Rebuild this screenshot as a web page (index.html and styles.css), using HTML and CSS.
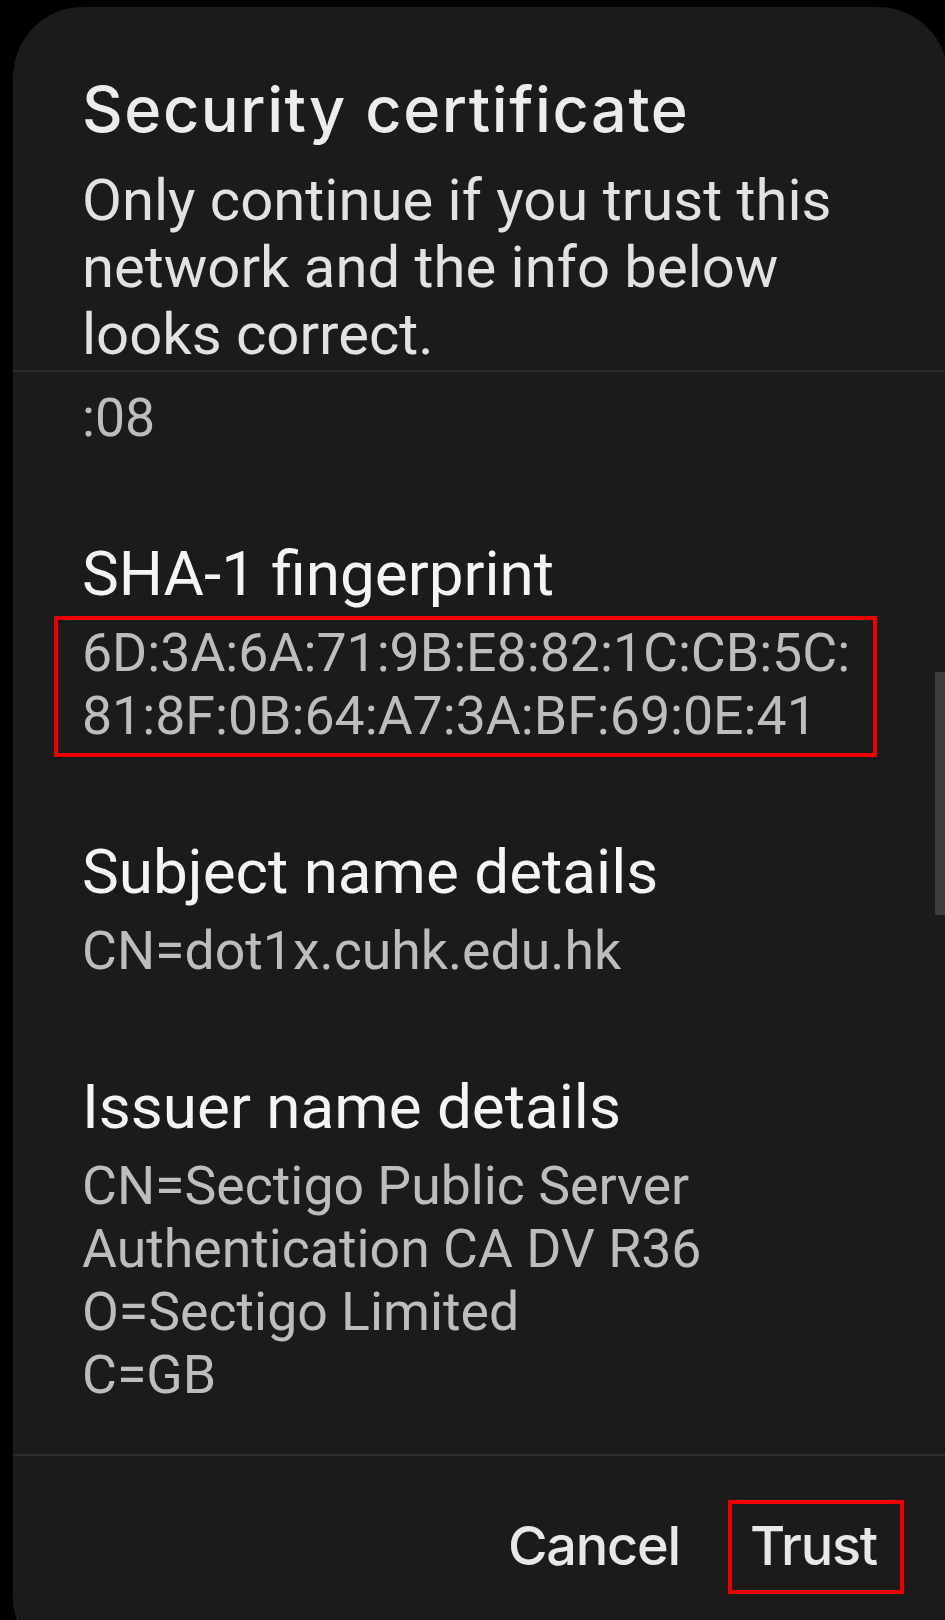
FILE: index.html
```html
<!DOCTYPE html>
<html lang="en">
<head>
<meta charset="utf-8">
<title>Security certificate</title>
<link rel="stylesheet" href="styles.css">
</head>
<body>
<div class="screen">
  <div class="dialog">
    <header class="head">
      <h1 class="title">Security certificate</h1>
      <p class="intro">Only continue if you trust this network and the info below looks correct.</p>
    </header>
    <div class="rule"></div>
    <div class="body">
      <div class="list">
        <div class="value">:08</div>
        <section class="item">
          <h2 class="label">SHA-1 fingerprint</h2>
          <div class="value mark"><span>6D:3A:6A:71:9B:E8:82:1C:CB:5C:</span><span>81:8F:0B:64:A7:3A:BF:69:0E:41</span></div>
        </section>
        <section class="item">
          <h2 class="label">Subject name details</h2>
          <div class="value">CN=dot1x.cuhk.edu.hk</div>
        </section>
        <section class="item">
          <h2 class="label">Issuer name details</h2>
          <div class="value"><span class="ln">CN=Sectigo Public Server</span><span class="ln">Authentication CA DV R36</span><span class="ln">O=Sectigo Limited</span><span class="ln">C=GB</span></div>
        </section>
      </div>
      <div class="scrollbar"></div>
    </div>
    <div class="rule"></div>
    <footer class="actions">
      <button class="btn">Cancel</button>
      <button class="btn btn-marked">Trust</button>
    </footer>
  </div>
</div>
</body>
</html>
```
FILE: styles.css
```css
html, body {
  margin: 0;
  padding: 0;
  background: #000;
}
body {
  width: 945px;
  height: 1620px;
  overflow: hidden;
}
.screen {
  padding: 7px 0 0 13px;
}
.dialog {
  width: 935px;
  height: 1660px;
  background: #1b1b1b;
  border-radius: 70px;
  display: flex;
  flex-direction: column;
}
.head {
  padding: 65px 80px 2px 69px;
}
.title {
  margin: 0;
  font-family: Inter, "Open Sans", sans-serif;
  font-weight: 500;
  font-size: 63px;
  line-height: 74px;
  letter-spacing: 1.6px;
  color: #ececec;
}
.intro {
  margin: 21px 0 0;
  font-family: Roboto, sans-serif;
  font-size: 58px;
  line-height: 67px;
  color: #e2e2e2;
}
.rule {
  flex: none;
  height: 2px;
  background: #2d2d2d;
}
.body {
  position: relative;
  flex: none;
  height: 1082px;
  overflow: hidden;
  box-sizing: border-box;
  padding: 14px 80px 0 69px;
}
.value {
  font-family: Roboto, sans-serif;
  font-size: 53.6px;
  line-height: 63px;
  color: #bdbdbd;
}
.ln {
  display: block;
}
.item {
  padding-top: 89px;
}
.label {
  margin: 0 0 11px;
  font-family: Roboto, sans-serif;
  font-weight: 400;
  font-size: 62px;
  line-height: 72px;
  color: #f5f5f5;
}
.mark {
  position: relative;
  width: fit-content;
}
.mark span {
  display: block;
}
.mark::after {
  content: "";
  position: absolute;
  top: -5px;
  bottom: -10px;
  left: -28px;
  right: -27px;
  border: 4px solid #ee0000;
}
.scrollbar {
  position: absolute;
  right: 3px;
  top: 300px;
  width: 10px;
  height: 243px;
  background: #3c3c3c;
}
.actions {
  display: flex;
  justify-content: flex-end;
  gap: 70px;
  padding: 62px 71px 0 0;
}
.btn {
  margin: 0;
  padding: 0;
  border: 0;
  background: none;
  font-family: Inter, "Open Sans", sans-serif;
  font-weight: 500;
  font-size: 54px;
  line-height: 56px;
  letter-spacing: -1.2px;
  color: #e8e8e8;
}
.btn-marked {
  position: relative;
}
.btn-marked::after {
  content: "";
  position: absolute;
  top: -18px;
  bottom: -20px;
  left: -22px;
  right: -27px;
  border: 4px solid #ee0000;
}
```
